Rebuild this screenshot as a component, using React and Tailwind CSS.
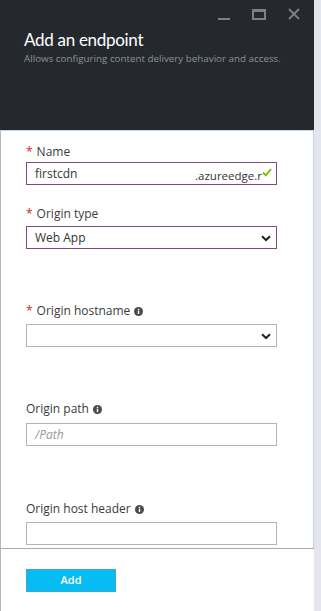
import React from "react";

function Info() {
  return (
    <svg width="9" height="9" viewBox="0 0 10 10" className="ml-1 inline-block">
      <circle cx="5" cy="5" r="5" fill="#4a4a4a" />
      <rect x="4.2" y="4.2" width="1.6" height="3.6" fill="#fff" />
      <rect x="4.2" y="2" width="1.6" height="1.5" fill="#fff" />
    </svg>
  );
}

function Chevron() {
  return (
    <svg width="10" height="7" viewBox="0 0 10 7" className="absolute right-[5px] top-[8px]">
      <path d="M1 1.2 L5 5 L9 1.2" fill="none" stroke="#222" strokeWidth="2" />
    </svg>
  );
}

function Label({ required, info, children, className = "" }) {
  return (
    <div className={"flex items-center h-[14px] text-[12px] text-[#3b3b3b] " + className}>
      {required && <span className="mr-1 text-[#d2232a]">*</span>}
      <span>{children}</span>
      {info && <Info />}
    </div>
  );
}

export default function App() {
  return (
    <div className="flex h-[611px] w-[321px] bg-[#e4e5ee]" style={{ fontFamily: '"Open Sans", "Noto Sans", sans-serif' }}>
      <div className="flex w-[314px] flex-col">
        <div className="relative h-[131px] border-b border-[#c3d6ea] bg-[#25292e] pl-[24px] pt-[28px]">
          <div className="absolute right-[14px] top-[8px] flex items-center gap-[22px]">
            <div className="mt-[10px] h-[2px] w-[12px] bg-[#7c8187]" />
            <div className="h-[11px] w-[14px] border-2 border-t-[3px] border-[#7c8187]" />
            <svg width="12" height="12" viewBox="0 0 12 12">
              <path d="M1 1 L11 11 M11 1 L1 11" stroke="#7c8187" strokeWidth="1.8" />
            </svg>
          </div>
          <h1 className="font-[Lato,sans-serif] text-[17px] leading-[23px] tracking-[-0.3px] text-white">Add an endpoint</h1>
          <p className="mt-[1px] text-[9.8px] text-[#8b9299]">
            Allows configuring content delivery behavior and access.
          </p>
        </div>

        <div className="flex-1 border-l border-r border-l-[#b8b8b8] border-r-[#c3d6ea] bg-white pl-[25px] pt-[14px]">
          <Label required>Name</Label>
          <div className="relative mt-[3px] flex h-[23px] w-[251px] items-center border border-[#7b4d7b] pl-[8px] pr-[4px] text-[12px] text-[#333]">
            <span>firstcdn</span>
            <span className="ml-auto mt-[4px] text-[11.5px] text-[#333]">.azureedge.r</span>
            <svg width="10" height="9" viewBox="0 0 10 9" className="-mt-[2px]">
              <path d="M1 4.5 L3.8 7.3 L9 1.2" fill="none" stroke="#7fba00" strokeWidth="1.8" />
            </svg>
          </div>

          <Label required className="mt-[22px]">Origin type</Label>
          <div className="relative mt-[5px] flex h-[23px] w-[251px] items-center border border-[#7b4d7b] pl-[8px] text-[12px] text-[#333]">
            <span>Web App</span>
            <Chevron />
          </div>

          <Label required info className="mt-[55px]">Origin hostname</Label>
          <div className="relative mt-[6px] h-[23px] w-[251px] border border-[#b4b4b4]">
            <Chevron />
          </div>

          <Label info className="mt-[55px]">Origin path</Label>
          <div className="mt-[7px] flex h-[23px] w-[251px] items-center border border-[#b4b4b4] pl-[8px] text-[12px] italic text-[#9a9a9a]">
            /Path
          </div>

          <Label info className="mt-[56px]">Origin host header</Label>
          <div className="mt-[6px] h-[23px] w-[251px] border border-[#b4b4b4]" />
        </div>

        <div className="h-[63px] border-l border-t border-l-[#b8b8b8] border-t-[#a9a9a9] bg-white pl-[25px] pt-[20px]">
          <button className="flex h-[23px] w-[90px] items-center justify-center border border-[#3fa7d0] bg-[#05bdf2] text-[11px] font-semibold text-white">
            Add
          </button>
        </div>
      </div>
    </div>
  );
}
